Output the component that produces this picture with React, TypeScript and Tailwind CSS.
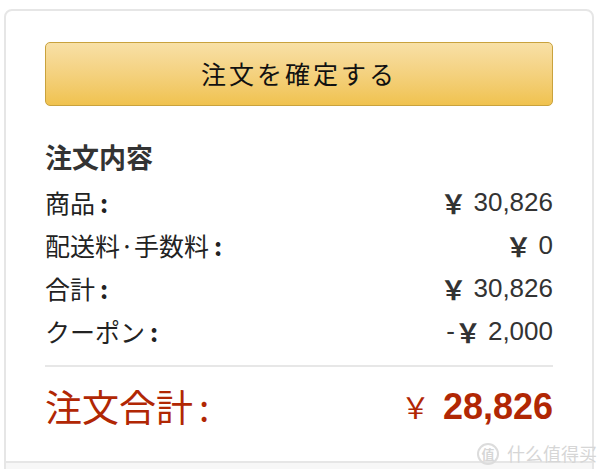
import React from 'react';

interface Line {
  label: string;
  amount: string;
  minus?: boolean;
}

const lines: Line[] = [
  { label: '商品', amount: '30,826' },
  { label: '配送料·手数料', amount: '0' },
  { label: '合計', amount: '30,826' },
  { label: 'クーポン', amount: '2,000', minus: true },
];

const jp = { fontFamily: '"Noto Sans CJK JP", "Liberation Sans", sans-serif' };
const num = { fontFamily: '"Liberation Sans", "Noto Sans CJK JP", sans-serif' };

export default function App() {
  return (
    <div className="w-[600px] h-[469px] overflow-hidden bg-white pt-[9px] pl-[4px] pr-[6px] relative" style={jp}>
      <div className="border-2 border-[#e6e6e6] rounded-t-[8px] bg-white">
        <div className="px-[39px] pt-[31px]">
          <button
            type="button"
            className="w-full h-[64px] rounded-[5px] border border-[#c9a23d] bg-gradient-to-b from-[#f8e0a6] to-[#f0c24e] flex items-center justify-center text-[25px] tracking-[3px] text-[#111] cursor-pointer"
          >
            注文を確定する
          </button>

          <div className="mt-[30px] h-[42px] flex items-center text-[27px] font-bold text-[#333]">注文内容</div>

          <div className="mt-[3px]">
            {lines.map((line) => (
              <div key={line.label} className="h-[43px] flex items-center justify-between text-[#222]">
                <span className="text-[25px]">
                  {line.label}
                  <span className="ml-[5px] font-bold">:</span>
                </span>
                <span className="flex items-center text-[26px] text-[#333]" style={num}>
                  {line.minus && <span>-</span>}
                  <span className="text-[26px] font-bold mr-[7px]" style={jp}>￥</span>
                  <span>{line.amount}</span>
                </span>
              </div>
            ))}
          </div>

          <div className="mt-[12px] h-[2px] bg-[#e7e7e7]" />

          <div className="h-[80px] flex items-center justify-between text-[#b12704]">
            <span className="text-[37px]">
              注文合計<span className="ml-[6px]">:</span>
            </span>
            <span className="flex items-center" style={num}>
              <span className="text-[29px] mr-[13px]" style={jp}>￥</span>
              <span className="text-[36px] font-bold">28,826</span>
            </span>
          </div>
          <div className="h-[14px]" />
        </div>
        <div className="border-t-2 border-[#e6e6e6] bg-[#f7f7f7] h-[40px]" />
      </div>

      {/* site watermark */}
      <div className="absolute left-[477px] top-[440px] flex items-center gap-[8px] text-[#d6d6d6] pointer-events-none">
        <span className="w-[22px] h-[22px] rounded-full border-2 border-[#dcdcdc] flex items-center justify-center text-[13px] font-bold">值</span>
        <span className="text-[18px] whitespace-nowrap" style={{ fontFamily: '"Noto Sans CJK SC", sans-serif' }}>什么值得买</span>
      </div>
    </div>
  );
}
